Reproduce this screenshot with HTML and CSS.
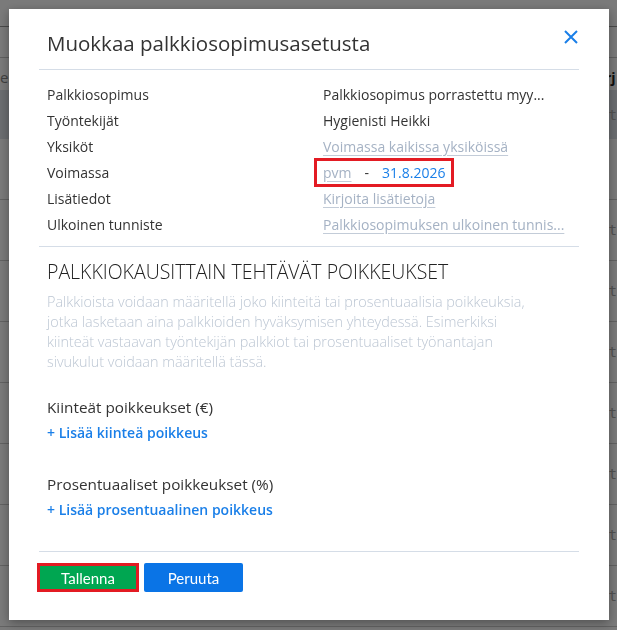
FILE: index.html
```html
<!DOCTYPE html>
<html lang="fi">
<head>
    <meta charset="UTF-8">
    <meta name="viewport" content="width=device-width, initial-scale=1.0">
    <title>Muokkaa palkkiosopimusasetusta</title>
    <link rel="stylesheet" href="styles.css">
</head>
<body>
    <div class="page">
        <div class="topbar"></div>
        <div class="subbar"></div>
        <div class="page-head">
            <div class="edge-left">ee</div>
            <div class="edge-right strong">rj</div>
        </div>
        <div class="bg-row bg-header">
            <div class="edge-left"></div>
            <div class="edge-right">ät</div>
        </div>
        <div class="bg-row"><div class="edge-left"></div><div class="edge-right"></div></div>
        <div class="bg-row"><div class="edge-left"></div><div class="edge-right">ät</div></div>
        <div class="bg-row"><div class="edge-left"></div><div class="edge-right">ät</div></div>
        <div class="bg-row"><div class="edge-left"></div><div class="edge-right">ät</div></div>
        <div class="bg-row"><div class="edge-left"></div><div class="edge-right">ät</div></div>
        <div class="bg-row"><div class="edge-left"></div><div class="edge-right">ät</div></div>
        <div class="bg-row"><div class="edge-left"></div><div class="edge-right">ät</div></div>
        <div class="bg-row"><div class="edge-left"></div><div class="edge-right">ät</div></div>
    </div>

    <div class="backdrop"></div>

    <div class="modal">
        <div class="modal-header">
            <h2>Muokkaa palkkiosopimusasetusta</h2>
            <button class="close" aria-label="Sulje">
                <svg width="14" height="14" viewBox="0 0 14 14"><path d="M1 1L13 13M13 1L1 13" stroke="#1a7fe8" stroke-width="2" fill="none"/></svg>
            </button>
        </div>

        <div class="details">
            <div class="label">Palkkiosopimus</div>
            <div class="value">Palkkiosopimus porrastettu myy...</div>
            <div class="label">Työntekijät</div>
            <div class="value">Hygienisti Heikki</div>
            <div class="label">Yksiköt</div>
            <div class="value"><a class="muted-link" href="#">Voimassa kaikissa yksiköissä</a></div>
            <div class="label">Voimassa</div>
            <div class="value">
                <span class="date-range">
                    <a class="muted-link" href="#">pvm</a>
                    <span class="dash">-</span>
                    <a class="blue-link" href="#">31.8.2026</a>
                </span>
            </div>
            <div class="label">Lisätiedot</div>
            <div class="value"><a class="muted-link" href="#">Kirjoita lisätietoja</a></div>
            <div class="label">Ulkoinen tunniste</div>
            <div class="value"><a class="muted-link" href="#">Palkkiosopimuksen ulkoinen tunnis...</a></div>
        </div>

        <div class="exceptions">
            <h3>PALKKIOKAUSITTAIN TEHTÄVÄT POIKKEUKSET</h3>
            <p class="hint">Palkkioista voidaan määritellä joko kiinteitä tai prosentuaalisia poikkeuksia,<br>
                jotka lasketaan aina palkkioiden hyväksymisen yhteydessä. Esimerkiksi<br>
                kiinteät vastaavan työntekijän palkkiot tai prosentuaaliset työnantajan<br>
                sivukulut voidaan määritellä tässä.</p>

            <div class="group">
                <div class="group-title">Kiinteät poikkeukset (€)</div>
                <a class="add-link" href="#">+ Lisää kiinteä poikkeus</a>
            </div>
            <div class="group">
                <div class="group-title">Prosentuaaliset poikkeukset (%)</div>
                <a class="add-link" href="#">+ Lisää prosentuaalinen poikkeus</a>
            </div>
        </div>

        <div class="modal-footer">
            <button class="btn btn-save">Tallenna</button>
            <button class="btn btn-cancel">Peruuta</button>
        </div>
    </div>
</body>
</html>
```

FILE: styles.css
```css
* { margin: 0; padding: 0; box-sizing: border-box; }
body {
    font-family: "Open Sans", "Noto Sans", Arial, sans-serif;
    font-size: 14px;
    color: #333;
    background: #fff;
    height: 100vh;
    overflow: hidden;
}

/* page behind the dialog */
.page { width: 100%; }
.topbar { height: 27px; border-bottom: 1px solid #9a9a9a; }
.subbar { height: 31px; border-bottom: 1px solid #c8c8c8; }
.page-head {
    display: flex;
    height: 32px;
    align-items: center;
    padding-top: 6px;
    font-size: 15px;
}
.edge-left {
    width: 16px;
    white-space: nowrap;
    color: #888;
    font-size: 15px;
}
.edge-right {
    margin-left: 584px;
    white-space: nowrap;
    color: #aaa;
    font-family: "DejaVu Sans Mono", monospace;
    font-size: 14px;
}
.edge-right.strong {
    margin-left: 589px;
    color: #222;
    font-weight: bold;
    font-family: "Open Sans", sans-serif;
    font-size: 14px;
}
.bg-row {
    display: flex;
    align-items: center;
    height: 61px;
    border-bottom: 1px solid #ccc;
}
.bg-header { height: 49px; background: #dfe4ea; border-bottom: none; }

.backdrop {
    position: fixed;
    top: 0; left: 0;
    width: 100vw; height: 100vh;
    background: rgba(0, 0, 0, 0.52);
}

/* dialog */
.modal {
    position: fixed;
    top: 9px; left: 9px;
    width: 600px;
    height: 611px;
    background: #fff;
    padding: 0 30px;
    box-shadow: 0 3px 10px rgba(0, 0, 0, 0.35);
}
.modal-header {
    display: flex;
    justify-content: space-between;
    align-items: flex-start;
    height: 61px;
    padding: 19px 0 0 8px;
    border-bottom: 1px solid #d5dde7;
}
.modal-header h2 {
    font-size: 20.5px;
    font-weight: normal;
    line-height: 30px;
    color: #333;
}
.close {
    background: none;
    border: none;
    cursor: pointer;
    margin-top: 1px;
    padding: 1px;
}

.details {
    display: grid;
    grid-template-columns: 276px 1fr;
    grid-auto-rows: 26px;
    align-items: center;
    padding: 11px 8px 9px;
    border-bottom: 1px solid #d5dde7;
}
.value { white-space: nowrap; }
.muted-link {
    color: #a5b2c4;
    text-decoration: underline;
    text-decoration-color: #c3ccd8;
    text-underline-offset: 3px;
}
.blue-link { color: #1a7fe8; text-decoration: none; }
.date-range {
    display: inline-flex;
    align-items: center;
    gap: 13px;
    height: 29px;
    margin-left: -9px;
    padding: 0 6px;
    border: 3px solid #e31b23;
}
.dash { color: #333; }

.exceptions { padding: 12px 8px 0; }
.exceptions h3 {
    font-size: 19.5px;
    font-weight: 300;
    line-height: 26px;
    color: #222;
}
.hint {
    margin-top: 7px;
    font-size: 14.4px;
    line-height: 20px;
    color: #bcc6d3;
    font-weight: 300;
    white-space: nowrap;
}
.group { display: flex; flex-direction: column; align-items: flex-start; margin-top: 22px; }
.group + .group { margin-top: 25px; }
.group-title { line-height: 26px; font-size: 15.3px; color: #333; }
.add-link {
    line-height: 26px;
    color: #1a7fe8;
    font-weight: 600;
    text-decoration: none;
}

.modal-footer {
    position: absolute;
    left: 30px; right: 30px; bottom: 0;
    height: 69px;
    display: flex;
    gap: 5px;
    padding-top: 11px;
    border-top: 1px solid #d5dde7;
}
.btn {
    width: 99px;
    height: 29px;
    border: none;
    border-radius: 2px;
    color: #fff;
    font-family: Lato, "Open Sans", sans-serif;
    font-size: 15px;
    cursor: pointer;
}
.btn-save {
    width: 102px;
    margin-left: -2px;
    border-radius: 0;
    background: #00a651;
    outline: 3px solid #e31b23;
    outline-offset: -3px;
}
.btn-cancel { background: #0a74e6; }
```
